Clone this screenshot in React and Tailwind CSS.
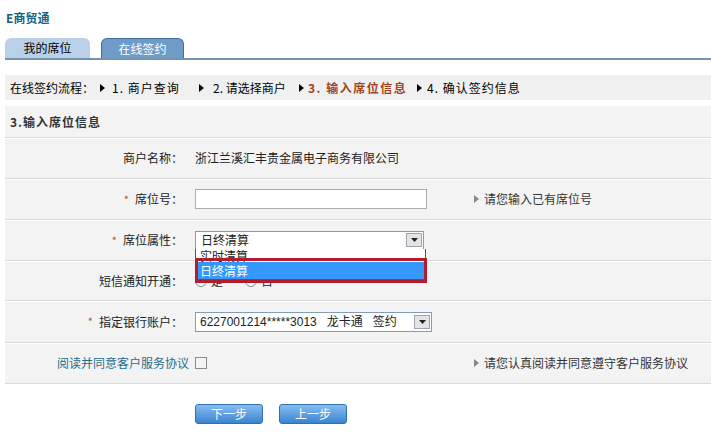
import React from "react";

const font = { fontFamily: '"Noto Sans CJK SC", "Noto Sans", sans-serif' };

function Tri({ className = "text-black" }) {
  return (
    <svg width="5" height="8" viewBox="0 0 5 8" className={className}>
      <path d="M0 0 L5 4 L0 8 Z" fill="currentColor" />
    </svg>
  );
}

function Star() {
  return <span className="text-[#b5561e] mr-[6px] text-[11px]">*</span>;
}

function Row({ label, required, children, hint, h = "h-[41px]" }) {
  return (
    <div className={`flex items-center ${h} border-b border-[#d9d9d9] shadow-[0_1px_0_#ffffff]`}>
      <div className="w-[178px] text-right shrink-0 flex items-center justify-end">
        {required && <Star />}
        <span>{label}</span>
      </div>
      <div className="ml-[12px] w-[279px] shrink-0 flex items-center">{children}</div>
      {hint && (
        <div className="flex items-center gap-[5px] text-[#333]">
          <Tri className="text-[#888]" />
          <span>{hint}</span>
        </div>
      )}
    </div>
  );
}

function SelectArrow() {
  return (
    <div className="w-[16px] h-[14px] border border-[#9aa7b3] bg-[#e4e4e4] flex items-center justify-center">
      <svg width="7" height="4" viewBox="0 0 7 4">
        <path d="M0 0 H7 L3.5 4 Z" fill="#222" />
      </svg>
    </div>
  );
}

export default function App() {
  return (
    <div className="w-[711px] h-[436px] bg-white text-[12px] text-[#222] overflow-hidden" style={font}>
      {/* title */}
      <div className="pl-[6px] pt-[9px] h-[40px] font-bold text-[#17607f] text-[12px]">E商贸通</div>

      {/* tabs */}
      <div className="ml-[5px] flex items-end gap-[11px] h-[20px] border-b-2 border-[#7592ae]">
        <div className="w-[85px] h-[20px] bg-[#b9d1e8] rounded-t-[6px] flex items-center justify-center text-black">
          我的席位
        </div>
        <div className="w-[83px] h-[20px] bg-[#6f9cc7] border border-b-0 border-[#41709c] rounded-t-[6px] flex items-center justify-center text-white">
          在线签约
        </div>
      </div>

      {/* breadcrumb */}
      <div className="ml-[5px] mt-[15px] h-[25px] bg-[#f0f0f0] flex items-center pl-[5px] text-black whitespace-nowrap">
        <span className="w-[90px]">在线签约流程：</span>
        <span className="w-[12px] flex"><Tri /></span>
        <span className="w-[87px] tracking-[1px]">1. 商户查询</span>
        <span className="w-[14px] flex"><Tri /></span>
        <span className="w-[86px]">2. 请选择商户</span>
        <span className="w-[9px] flex"><Tri /></span>
        <span className="w-[109px] font-bold text-[#a3431c] tracking-[1.5px]">3. 输入席位信息</span>
        <span className="w-[10px] flex"><Tri /></span>
        <span className="tracking-[1px]">4. 确认签约信息</span>
      </div>

      {/* form panel */}
      <div className="ml-[5px] mt-[6px] bg-[#f3f3f3] relative">
        <div className="h-[32px] flex items-center pl-[5px] font-bold text-[#333] border-b border-[#d9d9d9] shadow-[0_1px_0_#ffffff] tracking-[1px]">
          3.输入席位信息
        </div>

        <Row label="商户名称：">
          <span className="whitespace-nowrap">浙江兰溪汇丰贵金属电子商务有限公司</span>
        </Row>

        <Row label="席位号：" required hint="请您输入已有席位号">
          <div className="w-[232px] h-[20px] bg-white border border-[#a5acb2]" />
        </Row>

        <Row label="席位属性：" required>
          <div className="w-[229px] h-[19px] bg-white border border-[#7f9db9] flex items-center justify-between pl-[5px] pr-[1px]">
            <span>日终清算</span>
            <SelectArrow />
          </div>
        </Row>

        <Row label="短信通知开通：" h="h-[40px]">
          <div className="flex items-center gap-[4px]">
            <span className="w-[12px] h-[12px] rounded-full border border-[#888] bg-white" />
            <span>是</span>
            <span className="ml-[18px] w-[12px] h-[12px] rounded-full border border-[#888] bg-white" />
            <span>否</span>
          </div>
        </Row>

        <Row label="指定银行账户：" required h="h-[42px]">
          <div className="w-[237px] h-[20px] bg-white border border-[#7f9db9] flex items-center justify-between pl-[4px] pr-[1px] whitespace-nowrap">
            <span>
              <span style={{ fontFamily: '"Liberation Sans", sans-serif' }}>6227001214*****3013</span>
              <span className="ml-[10px]">龙卡通</span>
              <span className="ml-[10px]">签约</span>
            </span>
            <SelectArrow />
          </div>
        </Row>

        <div className="flex items-center h-[41px] border-b border-[#d9d9d9] shadow-[0_1px_0_#ffffff]">
          <div className="w-[184px] shrink-0 flex items-center justify-end">
            <span className="text-[#1f6e8c]">阅读并同意客户服务协议</span>
          </div>
          <div className="ml-[6px] w-[279px] shrink-0 flex items-center">
            <span className="w-[12px] h-[12px] border border-[#8a8a8a] bg-[#f4f4f4]" />
          </div>
          <div className="flex items-center gap-[5px] text-[#333]">
            <Tri className="text-[#888]" />
            <span>请您认真阅读并同意遵守客户服务协议</span>
          </div>
        </div>

        {/* open dropdown list */}
        <div className="absolute left-[190px] top-[143px] w-[231px] bg-white border border-[#555] border-t-0">
          <div className="h-[13px] leading-[13px] pl-[4px] overflow-hidden">实时清算</div>
          <div className="h-[17px] leading-[17px] pl-[4px] bg-[#3399ff] text-white">日终清算</div>
        </div>
        <div className="absolute left-[190px] top-[152px] w-[232px] h-[25px] border-[3px] border-[#b31d2b]" />
      </div>

      {/* buttons */}
      <div className="flex gap-[16px] pl-[195px] mt-[20px]">
        <button className="w-[68px] h-[20px] rounded-[3px] border border-[#2f6fae] bg-gradient-to-b from-[#86bdf0] to-[#3a84d0] text-white text-[12px]">
          下一步
        </button>
        <button className="w-[68px] h-[20px] rounded-[3px] border border-[#2f6fae] bg-gradient-to-b from-[#86bdf0] to-[#3a84d0] text-white text-[12px]">
          上一步
        </button>
      </div>
    </div>
  );
}
